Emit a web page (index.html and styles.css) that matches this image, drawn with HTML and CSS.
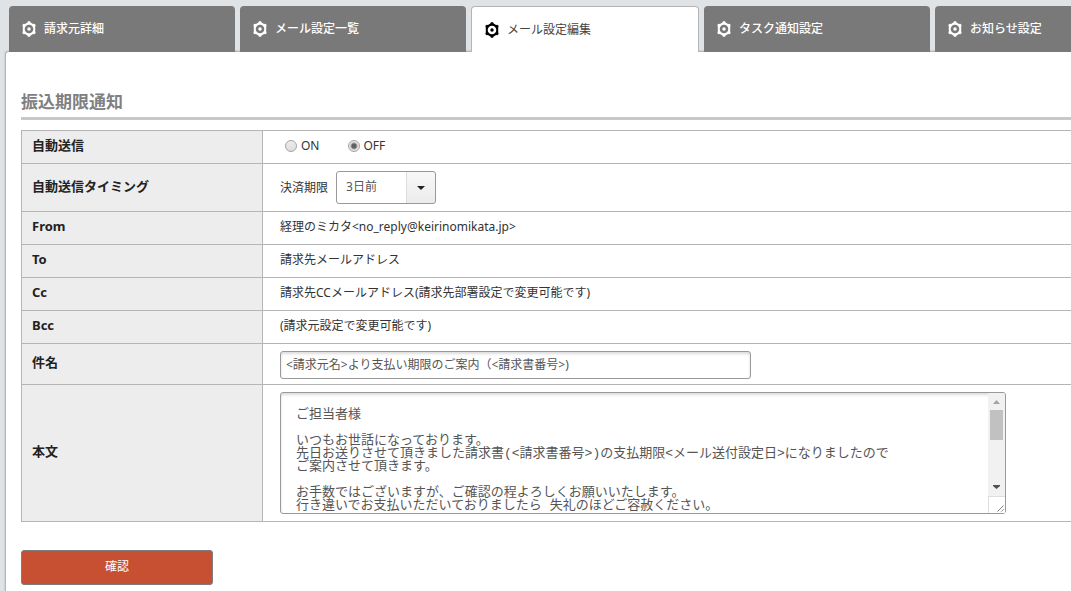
FILE: index.html
```html
<!DOCTYPE html>
<html lang="ja">
<head>
<meta charset="utf-8">
<meta name="viewport" content="width=device-width, initial-scale=1">
<title>メール設定編集</title>
<link rel="stylesheet" href="styles.css">
</head>
<body>
<svg class="sprite" aria-hidden="true">
  <symbol id="gear" viewBox="0 0 14 16">
    <path fill="currentColor" fill-rule="evenodd" d="M5.4 1.6 5.9.3h2.2l.5 1.3 2.5 1.4 1.3-.3 1.3 1.4-.5 1.5v4.8l.5 1.5-1.3 1.4-1.3-.3-2.5 1.4-.5 1.3H5.9l-.5-1.3L2.9 13l-1.3.3L.3 11.9l.5-1.5V5.6L.3 4.1l1.3-1.4 1.3.3zM7 3.7a4.3 4.3 0 1 0 0 8.6 4.3 4.3 0 0 0 0-8.6z"/>
    <circle cx="7" cy="8" r="1.7" fill="currentColor"/>
  </symbol>
</svg>
<nav class="tabs">
  <a class="tab" href="#"><svg class="gear"><use href="#gear"/></svg>請求元詳細</a>
  <a class="tab" href="#"><svg class="gear"><use href="#gear"/></svg>メール設定一覧</a>
  <a class="tab tab-active" href="#" aria-current="page"><svg class="gear"><use href="#gear"/></svg>メール設定編集</a>
  <a class="tab" href="#"><svg class="gear"><use href="#gear"/></svg>タスク通知設定</a>
  <a class="tab tab-last" href="#"><svg class="gear"><use href="#gear"/></svg>お知らせ設定</a>
</nav>
<main class="panel">
  <h1 class="title">振込期限通知</h1>
  <form>
    <table class="form-table">
      <tr>
        <th scope="row">自動送信</th>
        <td><div class="radios">
          <label class="radio"><input type="radio" name="auto">ON</label>
          <label class="radio"><input type="radio" name="auto" checked>OFF</label>
        </div></td>
      </tr>
      <tr>
        <th scope="row">自動送信タイミング</th>
        <td class="control"><div class="timing">
          <label for="timing">決済期限</label>
          <span class="select"><select id="timing"><option>3日前</option></select></span>
        </div></td>
      </tr>
      <tr><th scope="row">From</th><td>経理のミカタ&lt;no_reply@keirinomikata.jp&gt;</td></tr>
      <tr><th scope="row">To</th><td>請求先メールアドレス</td></tr>
      <tr><th scope="row">Cc</th><td>請求先CCメールアドレス(請求先部署設定で変更可能です)</td></tr>
      <tr><th scope="row">Bcc</th><td>(請求元設定で変更可能です)</td></tr>
      <tr>
        <th scope="row"><label for="subject">件名</label></th>
        <td class="control control-text"><input class="subject" id="subject" type="text" value="&lt;請求元名&gt;より支払い期限のご案内（&lt;請求書番号&gt;)"></td>
      </tr>
      <tr>
        <th scope="row"><label for="message">本文</label></th>
        <td class="control"><div class="message-box">
          <textarea class="message" id="message">ご担当者様

いつもお世話になっております。
先日お送りさせて頂きました請求書(&lt;請求書番号&gt;)の支払期限&lt;メール送付設定日&gt;になりましたので
ご案内させて頂きます。

お手数ではございますが、ご確認の程よろしくお願いいたします。
行き違いでお支払いただいておりましたら 失礼のほどご容赦ください。</textarea>
          <div class="scrollbar" aria-hidden="true">
            <svg class="arrow arrow-up" viewBox="0 0 17 17"><path d="M5 11 8.500 7l3.500 4z"/></svg>
            <div class="thumb"></div>
            <svg class="arrow arrow-down" viewBox="0 0 17 17"><path d="M5 6h7v1L8.500 10 5 7z"/></svg>
            <svg class="grip" viewBox="0 0 17 17"><path d="M9 15.500 15.500 9M13 15.500l2.500-2.500"/></svg>
          </div>
        </div></td>
      </tr>
    </table>
    <button class="submit" type="button">確認</button>
  </form>
</main>
</body>
</html>
```
FILE: styles.css
```css
* {
  box-sizing: border-box;
}

body {
  margin: 0;
  padding: 6px 0 0 5px;
  min-height: 100vh;
  display: flex;
  flex-direction: column;
  background: #dfe3e6;
  color: #333;
  font: 12px/18px "Noto Sans", "Noto Sans CJK JP", sans-serif;
}

.sprite {
  display: none;
}

.tabs {
  position: relative;
  z-index: 1;
  display: flex;
  gap: 5px;
  margin-bottom: -1px;
  padding-left: 4px;
}

.tab {
  flex: 0 0 226px;
  display: flex;
  align-items: center;
  gap: 8px;
  height: 46px;
  padding: 0 13px;
  border-radius: 4px 4px 0 0;
  background: #797979;
  color: #fff;
  font-weight: 500;
  text-decoration: none;
  white-space: nowrap;
}

.tab-active {
  flex-basis: 228px;
  border: 1px solid #b5b5b5;
  border-bottom: 0;
  background: #fff;
  color: #444;
  font-weight: 400;
}

.tab-active .gear {
  color: #000;
}

.tab-last {
  flex-shrink: 1;
  border-radius: 4px 0 0 0;
}

.gear {
  width: 14px;
  height: 16px;
}

.panel {
  flex: 1;
  padding: 40px 0 6px 15px;
  border: 1px solid #b5b5b5;
  border-width: 1px 0 0 1px;
  border-radius: 4px 0 0 0;
  background: #fff;
  box-shadow: 0 0 2px #aaa;
}

.title {
  margin: 0 0 10px;
  padding-bottom: 5px;
  border-bottom: 3px solid #c8c8c8;
  color: #808080;
  font-size: 17px;
  font-weight: 700;
  line-height: 20px;
}

.form-table {
  width: 100%;
  border-collapse: collapse;
}

.form-table th,
.form-table td {
  border: 1px solid #b5b5b5;
  border-right: 0;
}

.form-table th {
  width: 241px;
  padding: 5px 10px 9px;
  background: #ededed;
  color: #222;
  font-size: 13px;
  font-weight: 700;
  text-align: left;
}

.form-table td {
  padding: 6px 17px 8px;
}

.form-table .control {
  padding: 7px 17px;
}

.form-table .control-text {
  padding: 7px 17px 5px;
}

.radios {
  display: flex;
  gap: 28px;
  padding-left: 5px;
}

.radio {
  display: flex;
  align-items: center;
  gap: 4px;
}

.radio input {
  appearance: none;
  width: 12px;
  height: 12px;
  margin: 0;
  border: 1px solid #a5a5a5;
  border-radius: 50%;
  background: linear-gradient(#eee, #ddd);
}

.radio input:checked {
  background: radial-gradient(circle, #606060 0 2px, #e5e5e5 4px);
}

.timing {
  display: flex;
  align-items: center;
  gap: 8px;
}

.select {
  position: relative;
}

.select select {
  appearance: none;
  display: block;
  width: 100px;
  height: 33px;
  padding: 0 32px 2px 9px;
  border: 1px solid #999;
  border-radius: 3px;
  background: linear-gradient(#f8f8f8, #ebebeb) right / 29px 100% no-repeat #fff;
  color: #555;
  font: inherit;
}

.select::before {
  content: "";
  position: absolute;
  top: 1px;
  bottom: 1px;
  right: 29px;
  border-left: 1px solid #ddd;
}

.select::after {
  content: "";
  position: absolute;
  top: 15px;
  right: 11px;
  border: 4px solid transparent;
  border-top-color: #222;
  border-bottom: 0;
  pointer-events: none;
}

.subject,
.message {
  display: block;
  width: 100%;
  border: 1px solid #999;
  border-radius: 3px;
  background: #fff;
  box-shadow: inset 0 2px 3px #ddd;
  color: #555;
}

.subject {
  max-width: 471px;
  height: 28px;
  padding: 0 5px 2px;
  font: inherit;
}

.message-box {
  position: relative;
  max-width: 726px;
}

.message {
  height: 122px;
  padding: 15px 32px 0 15px;
  resize: none;
  scrollbar-width: none;
  font: 13px/13px "Liberation Mono", "Noto Sans CJK JP", monospace;
}

.scrollbar {
  position: absolute;
  top: 1px;
  right: 1px;
  bottom: 1px;
  width: 17px;
  display: flex;
  flex-direction: column;
  border-radius: 0 2px 2px 0;
  background: #f1f1f1;
  pointer-events: none;
}

.arrow {
  height: 17px;
}

.arrow-up {
  fill: #a3a3a3;
}

.arrow-down {
  margin-top: auto;
  fill: #505050;
}

.thumb {
  height: 30px;
  margin: 0 2px;
  background: #c1c1c1;
}

.grip {
  height: 17px;
  border: 1px solid #ddd;
  border-width: 1px 0 0 1px;
  background: #fff;
  fill: none;
  stroke: #777;
}

.submit {
  display: block;
  width: 192px;
  height: 35px;
  margin-top: 28px;
  padding: 0 0 2px;
  border: 1px solid #7d7d7d;
  border-radius: 3px;
  background: #c65031;
  color: #fff;
  font: inherit;
}
```
